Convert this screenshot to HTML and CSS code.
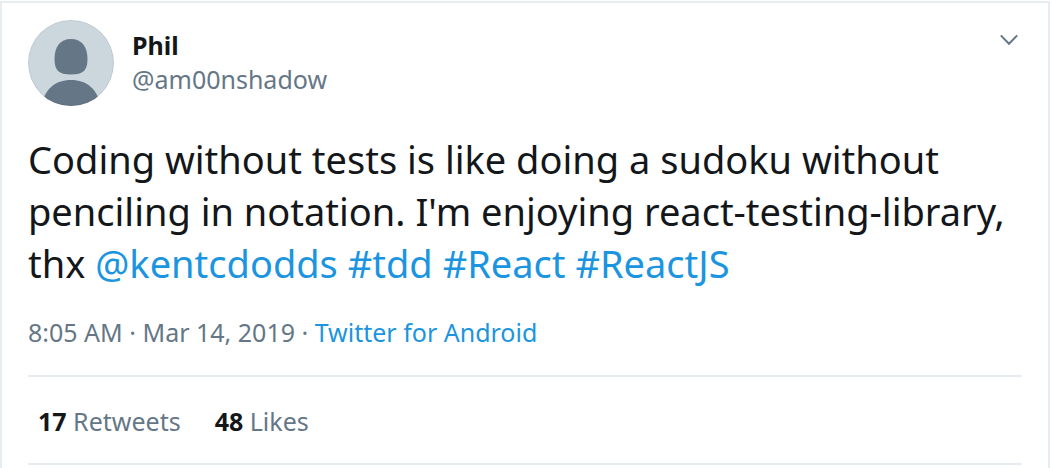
FILE: index.html
```html
<!DOCTYPE html>
<html lang="en">
<head>
    <meta charset="UTF-8">
    <meta name="viewport" content="width=device-width, initial-scale=1.0">
    <title>Phil on Twitter</title>
    <link rel="stylesheet" href="styles.css">
</head>
<body>
    <article class="tweet">
        <header class="tweet-header">
            <a class="author" href="#">
                <svg class="avatar" viewBox="0 0 86 86" aria-hidden="true">
                    <defs>
                        <clipPath id="avatarClip"><circle cx="43" cy="43" r="43"/></clipPath>
                    </defs>
                    <g clip-path="url(#avatarClip)">
                        <rect width="86" height="86" fill="#ccd6dd"/>
                        <path fill="#657786" d="M43 19c11 0 16.500 8 16.500 20 0 11-4 15.500-16.500 15.500S26.500 50 26.500 39C26.500 27 32 19 43 19z"/>
                        <path fill="#657786" d="M13 86c4-17 14-26 30-26s26 9 30 26z"/>
                        <circle cx="43" cy="43" r="42.500" fill="none" stroke="#000" stroke-opacity="0.06"/>
                    </g>
                </svg>
                <span class="names">
                    <span class="name">Phil</span>
                    <span class="handle">@am00nshadow</span>
                </span>
            </a>
            <button class="menu-button" type="button" aria-label="More">
                <svg class="caret" viewBox="0 0 18 12" aria-hidden="true">
                    <path d="M.8 1.400L9 9.800l8.200-8.400" fill="none" stroke="#657786" stroke-width="2"/>
                </svg>
            </button>
        </header>
        <p class="tweet-text">Coding without tests is like doing a sudoku without penciling in notation. I'm enjoying react-testing-library, thx <a href="#">@kentcdodds</a> <a href="#">#tdd</a> <a href="#">#React</a> <a href="#">#ReactJS</a></p>
        <div class="meta">8:05 AM · Mar 14, 2019 · <a href="#">Twitter for Android</a></div>
        <div class="stats">
            <a class="stat" href="#"><strong>17</strong> Retweets</a>
            <a class="stat" href="#"><strong>48</strong> Likes</a>
        </div>
    </article>
</body>
</html>
```
FILE: styles.css
```css
* {
    box-sizing: border-box;
}
body {
    display: flex;
    min-height: 100vh;
    margin: 0;
    padding: 1px 1px 0 0;
    font-family: "Noto Sans", "Open Sans", sans-serif;
    color: #14171a;
    background-color: #fff;
}
a {
    color: #1b95e0;
    text-decoration: none;
}
.tweet {
    flex: 1;
    border: 2px solid #e6ecf0;
    border-bottom: none;
    padding: 17px 26px 0;
}
.tweet-header {
    display: flex;
    justify-content: space-between;
    align-items: flex-start;
}
.author {
    display: flex;
    align-items: flex-start;
    gap: 18px;
}
.avatar {
    width: 86px;
    height: 86px;
}
.names {
    display: flex;
    flex-direction: column;
    padding-top: 8px;
    font-size: 25px;
    line-height: 34px;
}
.name {
    color: #14171a;
    font-weight: bold;
}
.handle {
    color: #657786;
}
.menu-button {
    padding: 14px 4px;
    border: none;
    background: none;
    cursor: pointer;
}
.caret {
    display: block;
    width: 18px;
    height: 12px;
}
.tweet-text {
    margin: 27px 0 0;
    font-size: 38px;
    line-height: 52px;
}
.meta {
    margin-top: 26px;
    padding-bottom: 26px;
    border-bottom: 2px solid #e6ecf0;
    color: #657786;
    font-size: 25px;
    line-height: 34px;
}
.stats {
    display: flex;
    gap: 34px;
    padding: 27px 10px 25px;
    border-bottom: 2px solid #e6ecf0;
    font-size: 25px;
    line-height: 34px;
}
.stat {
    color: #657786;
}
.stat strong {
    color: #14171a;
}
```
